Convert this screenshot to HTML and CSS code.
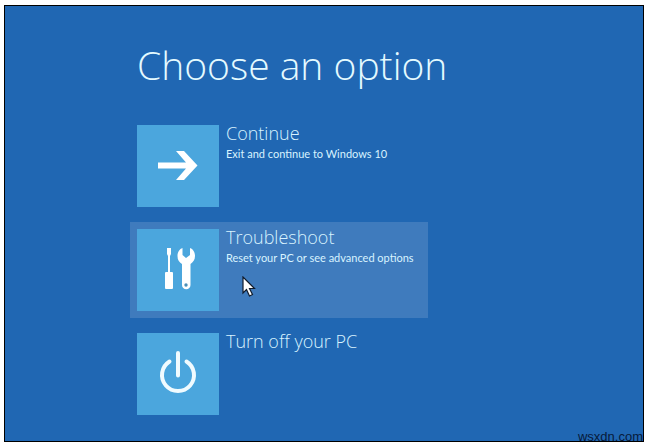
FILE: index.html
```
<!DOCTYPE html>
<html lang="en">
<head>
    <meta charset="UTF-8">
    <meta name="viewport" content="width=device-width, initial-scale=1.0">
    <title>Choose an option</title>
    <link rel="stylesheet" href="styles.css">
</head>
<body>
    <main class="screen">
        <div class="content">
            <h1>Choose an option</h1>
            <div class="options">
                <button type="button" class="option">
                    <span class="tile">
                        <svg viewBox="0 0 82 82" aria-hidden="true">
                            <path d="M21 37.5H49L39 26H47L60.5 40.5L47 55H39L49 43.5H21Z" fill="#fff"/>
                        </svg>
                    </span>
                    <span class="text">
                        <span class="name">Continue</span>
                        <span class="desc">Exit and continue to Windows 10</span>
                    </span>
                </button>
                <button type="button" class="option active">
                    <span class="tile">
                        <svg viewBox="0 0 82 82" aria-hidden="true">
                            <path d="M30 19H34V25L33 27V43H35Q36 43 36 44V59Q36 60 35 60H29Q28 60 28 59V44Q28 43 29 43H31V27L30 25Z" fill="#fff"/>
                            <path d="M45.5 19V26L49 29L53 26V19C56 20 58 23 58 27C58 31 56 33 53.5 35V56A4 4 0 0 1 45 56V35C42 33 40.5 31 40.5 27C40.5 23 42.5 20 45.5 19Z" fill="#fff"/>
                            <circle cx="49" cy="56" r="1.7" fill="#4a8fb8"/>
                        </svg>
                    </span>
                    <span class="text">
                        <span class="name">Troubleshoot</span>
                        <span class="desc">Reset your PC or see advanced options</span>
                    </span>
                    <svg class="cursor" viewBox="0 0 14 22" aria-hidden="true">
                        <path d="M1 1V17L4.5 13.5L7.5 20L10.5 18.5L7.5 12.5H12.5Z" fill="#fff" stroke="#111c2c" stroke-width="1.2"/>
                    </svg>
                </button>
                <button type="button" class="option">
                    <span class="tile">
                        <svg viewBox="0 0 82 82" aria-hidden="true">
                            <path d="M32.5 28.5A16 16 0 1 0 49.5 28.5M41 20V42.5" fill="none" stroke="#f0fbff" stroke-width="4" stroke-linecap="round"/>
                        </svg>
                    </span>
                    <span class="text">
                        <span class="name">Turn off your PC</span>
                    </span>
                </button>
            </div>
        </div>
        <footer class="source">wsxdn.com</footer>
    </main>
</body>
</html>
```

FILE: styles.css
```
* {
    box-sizing: border-box;
}
body {
    margin: 0;
    padding: 5px 10px 5px 4px;
    min-height: 100vh;
    display: flex;
    background: #fff;
    font-family: "Open Sans", "Noto Sans", sans-serif;
}
.screen {
    flex: 1;
    display: flex;
    flex-direction: column;
    justify-content: space-between;
    background: #2067b3;
    border: 1px solid #000;
}
.content {
    padding: 31px 20px 0 125px;
}
h1 {
    margin: 0 0 25px 7px;
    font-size: 39px;
    line-height: 56px;
    font-weight: 300;
    color: #e4faff;
}
.options {
    display: flex;
    flex-direction: column;
    align-items: flex-start;
    gap: 8px;
}
.option {
    position: relative;
    display: flex;
    align-items: flex-start;
    gap: 7px;
    width: 100%;
    max-width: 298px;
    padding: 7px;
    border: none;
    background: transparent;
    color: #d8f3ff;
    font-family: inherit;
    text-align: left;
    cursor: pointer;
}
.option.active,
.option:hover {
    background: #3f7bbd;
}
.tile {
    flex: none;
    width: 82px;
    height: 82px;
    background: #4ba6dd;
}
.tile svg {
    display: block;
    width: 100%;
    height: 100%;
}
.text {
    display: flex;
    flex-direction: column;
    white-space: nowrap;
}
.name {
    font-size: 18px;
    line-height: 16px;
    font-weight: 300;
}
.desc {
    font-family: Lato, "Open Sans", sans-serif;
    font-size: 11px;
    line-height: 26px;
}
.cursor {
    position: absolute;
    left: 112px;
    top: 54px;
    width: 14px;
    height: 22px;
}
.source {
    align-self: flex-end;
    font-family: "Liberation Sans", Arial, sans-serif;
    font-size: 13px;
    line-height: 8px;
    color: #071a3a;
}
```
